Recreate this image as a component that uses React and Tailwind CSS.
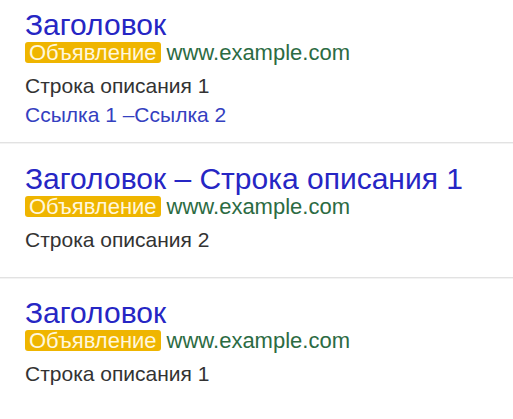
const ads = [
  {
    title: "Заголовок",
    lines: ["Строка описания 1"],
    links: true,
  },
  {
    title: "Заголовок – Строка описания 1",
    lines: ["Строка описания 2"],
    links: false,
  },
  {
    title: "Заголовок",
    lines: ["Строка описания 1"],
    links: false,
  },
]

function Ad({ title, lines, links }) {
  return (
    <div className="px-[25px]">
      <div className="text-[30px] leading-[30px] text-[#2626c4]">{title}</div>
      <div className="mt-[2px] flex items-center gap-[6px]">
        <span className="rounded-[3px] bg-[#efb500] px-[4px] text-[22px] leading-[21px] text-[#fff7dc]">
          Объявление
        </span>
        <span className="text-[22px] leading-[21px] text-[#2c6b43]">www.example.com</span>
      </div>
      {lines.map((line) => (
        <div key={line} className="mt-[11px] text-[21px] leading-[24px] text-[#333]">
          {line}
        </div>
      ))}
      {links && (
        <div className="mt-[5px] text-[21px] leading-[24px] text-[#3440c0]">Ссылка 1 –Ссылка 2</div>
      )}
    </div>
  )
}

function Divider() {
  return (
    <div>
      <div className="h-[1px] bg-[#e2e2e2]" />
      <div className="h-[1px] bg-[#f3f3f3]" />
    </div>
  )
}

export default function App() {
  return (
    <div className="h-[419px] w-[513px] overflow-hidden bg-white font-['Liberation_Sans',Arial,sans-serif]">
      <div className="h-[142px] pt-[10px]">
        <Ad {...ads[0]} />
      </div>
      <Divider />
      <div className="h-[133px] pt-[20px]">
        <Ad {...ads[1]} />
      </div>
      <Divider />
      <div className="pt-[19px]">
        <Ad {...ads[2]} />
      </div>
    </div>
  )
}
